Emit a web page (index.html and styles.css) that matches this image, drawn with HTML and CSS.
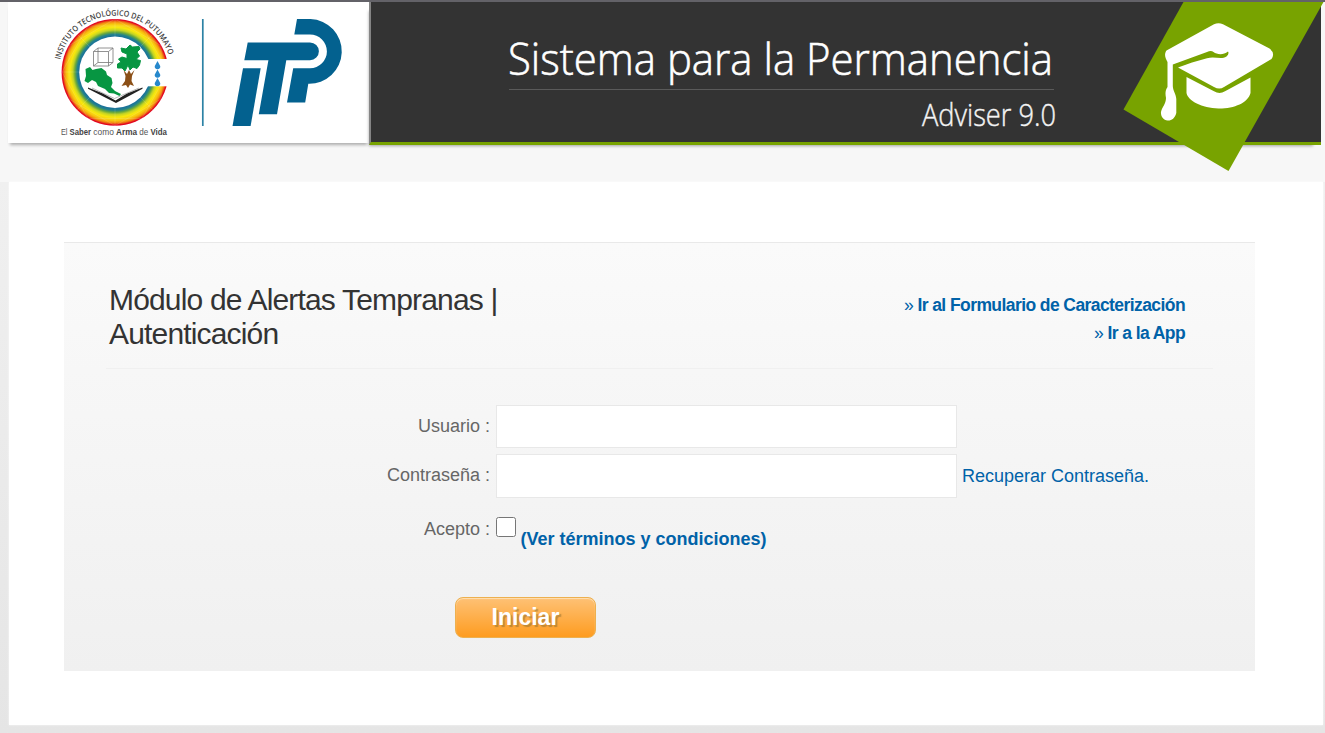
FILE: index.html
```html
<!DOCTYPE html>
<html lang="es">
<head>
<meta charset="utf-8">
<title>Sistema para la Permanencia</title>
<link rel="stylesheet" href="styles.css">
</head>
<body>
<header class="header">
  <div class="brand">
    <svg class="logo" viewBox="8 2 361 141" width="361" height="141">
      <defs>
        <radialGradient id="rainbow" gradientUnits="userSpaceOnUse" cx="115" cy="72.3" r="53.5">
          <stop offset=".67" stop-color="#19709b"/>
          <stop offset=".71" stop-color="#23828b"/>
          <stop offset=".75" stop-color="#69a83c"/>
          <stop offset=".79" stop-color="#c4d324"/>
          <stop offset=".84" stop-color="#f8e80c"/>
          <stop offset=".90" stop-color="#f8c80f"/>
          <stop offset=".94" stop-color="#f39211"/>
          <stop offset=".965" stop-color="#e94a18"/>
          <stop offset=".98" stop-color="#e30d20"/>
          <stop offset="1" stop-color="#e1001e"/>
        </radialGradient>
        <path id="sealArc" d="M60.3 59.8A56 56 0 0 1 169.5 58.5"/>
      </defs>
      <circle cx="115" cy="72.3" r="53.4" fill="url(#rainbow)"/>
      <g fill="none" stroke="#fff" stroke-opacity=".22" stroke-width=".6">
        <path d="M115 19L161 45.600V99L115 125.600L69 99V45.600ZM88 26L142 26L168 72L142 118.500H88L62 72Z"/>
        <path d="M115 19V126M62 72H168M77 34L153 110M153 34L77 110"/>
      </g>
      <circle cx="115" cy="72.3" r="35.800" fill="#fff"/>
      <path d="M147.300 59H174V86.300H147.300Z" fill="#fff"/>
      <g fill="none" stroke="#777" stroke-width=".8">
        <path d="M93.500 51.500H108.500V66H93.500ZM98 48H113V62.500H98ZM93.500 51.500L98 48M108.500 51.500L113 48M108.500 66L113 62.500M93.500 66L98 62.500"/>
      </g>
      <path fill="#079642" d="M84.500 81L86 76L85.500 69L90 67L92.500 70L96 69L101.500 68L106 71.500L107 75L111.500 78L112.500 83L111 87L115 91L121 94L119.500 96L114 93.500L109 93L105 89L98 86L96 82L92 80L88 83Z"/>
      <path fill="#8b4f16" d="M123.500 70L127 74L129 70L131 74L134.500 70L132 76L131.500 81L134 86L130 84.500L128 88L126 85L121.500 86L125 81L125.500 76Z"/>
      <path fill="#079642" stroke="#079642" stroke-width="1" stroke-linejoin="round" d="M121 48L126 49L130 45L132.500 47L139 46.500L140 49L137 52L139.500 56L136 59.500L140.500 60.500L139.500 65L137 68.500L133 67L130 70L128 65L125 71L122 68L117.500 68L117.500 64L121 62L118.500 59L122 57L127 58.500L127 54L122 52Z"/>
      <path d="M88 87.500L103 93.500L115.500 100.500L127 93.500L142.500 87.500V88.800L116 103L88 88.800Z" fill="#222"/>
      <path d="M92 88L114.500 98.500L139 88" fill="none" stroke="#999" stroke-width=".7"/>
      <g fill="#2788cc">
        <path d="M157.500 61L160.200 66A2.800 2.500 0 1 1 154.800 66ZM157.500 69.500L160.200 74.500A2.800 2.500 0 1 1 154.800 74.500ZM157.500 78L160.200 83A2.800 2.500 0 1 1 154.800 83Z"/>
      </g>
      <text class="seal-name"><textPath href="#sealArc" textLength="147" lengthAdjust="spacingAndGlyphs">INSTITUTO TECNOLÓGICO DEL PUTUMAYO</textPath></text>
      <g class="seal-motto">
        <text x="61" y="134.800" textLength="6.500" lengthAdjust="spacingAndGlyphs">El</text>
        <text class="strong" x="69.500" y="134.800" textLength="21.500" lengthAdjust="spacingAndGlyphs">Saber</text>
        <text x="93.300" y="134.800" textLength="20.500" lengthAdjust="spacingAndGlyphs">como</text>
        <text class="strong" x="116" y="134.800" textLength="21" lengthAdjust="spacingAndGlyphs">Arma</text>
        <text x="139.300" y="134.800" textLength="9" lengthAdjust="spacingAndGlyphs">de</text>
        <text class="strong" x="150.500" y="134.800" textLength="16.500" lengthAdjust="spacingAndGlyphs">Vida</text>
      </g>
      <path d="M202.800 19V126" stroke="#2c82a5" stroke-width="1.700"/>
      <g fill="#03618f">
        <path d="M243 68.300H260.700L250.600 126H232.500Z"/>
        <path d="M247.700 42.400H310A8.900 8.900 0 0 1 310 60.200H286.300L277 114.300H258.800L268.400 60.200H244.300Z"/>
        <path d="M297 19H310.500A32.200 32.200 0 0 1 308.300 83.700L305.200 102.500H287L293.200 68.300H310A16.900 16.900 0 0 0 310 34.500H294.300Z"/>
      </g>
    </svg>
  </div>
  <div class="banner">
    <svg class="banner-text" viewBox="371 2 750 140" width="750" height="140">
      <text class="system-name" x="508" y="74.500" textLength="545" lengthAdjust="spacingAndGlyphs">Sistema para la Permanencia</text>
      <path d="M509 89.500H1054" stroke="#5a5a5a"/>
      <text class="system-version" x="922" y="125.500" textLength="134" lengthAdjust="spacingAndGlyphs">Adviser 9.0</text>
    </svg>
    <svg class="badge" viewBox="1120 2 205 170" width="205" height="170">
      <path fill="#78a300" d="M1183.500 2H1323.500L1228.500 171L1123.500 109.500Z"/>
      <g fill="#fff">
        <path d="M1166.500 50.500L1214 24.300Q1218.500 22 1223 24.300L1269.500 48.500Q1275.500 53 1271.500 59L1224 87Q1219.500 90 1214 87L1178 67.500L1192 62.500L1207 58.200C1215 56 1221 60 1226.500 56.500Q1229.500 53.500 1228 51.500C1223 55.500 1217 54.500 1213.500 52Q1211 50 1207 52L1172.800 64.500V86C1173 91 1176 94 1176.300 99V113C1175 118.500 1171 121 1167.500 120.500C1163.500 120 1160.500 116 1161 112C1162 107 1166 104 1166 98C1165 93 1165.500 90 1167.500 87V62C1165 57.500 1164 54 1166.500 50.500Z"/>
        <path d="M1186.500 77L1214 91.300Q1219.500 94.500 1225 91.300L1250.500 77.500V93C1248 103 1234 108.700 1218.500 108.500C1202 108 1188 101 1186.500 93Z"/>
      </g>
    </svg>
  </div>
</header>
<main class="page">
  <section class="card">
    <div class="panel">
      <div class="panel-head">
        <h1 class="title">Módulo de Alertas Tempranas | Autenticación</h1>
        <nav class="links">
          <a class="link" href="#">» <b>Ir al Formulario de Caracterización</b></a>
          <a class="link" href="#">» <b>Ir a la App</b></a>
        </nav>
      </div>
      <form class="form">
        <div class="row">
          <label class="label" for="user">Usuario :</label>
          <input class="field" id="user" type="text">
        </div>
        <div class="row pass-row">
          <label class="label" for="pass">Contraseña :</label>
          <input class="field" id="pass" type="password">
          <a class="recover" href="#">Recuperar Contraseña.</a>
        </div>
        <div class="row terms-row">
          <label class="label" for="accept">Acepto :</label>
          <input class="check" id="accept" type="checkbox">
          <a class="terms" href="#">(Ver términos y condiciones)</a>
        </div>
        <button class="submit" type="button">Iniciar</button>
      </form>
    </div>
  </section>
</main>
</body>
</html>
```
FILE: styles.css
```css
* { box-sizing: border-box; }
body {
  margin: 0;
  height: 733px;
  overflow: hidden;
  background: #f7f7f7;
  font-family: "Liberation Sans", Arial, sans-serif;
  font-size: 18px;
  color: #666;
}
a { color: #0062a8; text-decoration: none; }
svg { display: block; }

.header {
  height: 182px;
  border-top: 2px solid #636268;
  padding: 0 4px 0 8px;
  display: flex;
  align-items: flex-start;
}
.brand {
  width: 361px;
  height: 141px;
  background: #fff;
  box-shadow: 0 4px 3px -2px rgba(0, 0, 0, .3);
}
.banner {
  position: relative;
  flex: 1;
  height: 143px;
  border-left: 2px solid #858585;
  border-bottom: 3px solid #78a300;
  background: #333;
  box-shadow: -4px 5px 3px -4px rgba(0, 0, 0, .35);
}
.badge { position: absolute; left: 749px; top: 0; }
.seal-name { font: 600 8px "Open Sans", sans-serif; fill: #444; }
.seal-motto { font: 9.5px "Liberation Sans", sans-serif; fill: #555; }
.strong { font-weight: 700; fill: #444; }
.system-name {
  font: 300 45px "Open Sans", sans-serif;
  fill: #fff;
  stroke: #fff;
  stroke-width: .6px;
}
.system-version {
  font: 300 31px "Open Sans", sans-serif;
  fill: #f4f4f4;
  stroke: #f4f4f4;
  stroke-width: .4px;
}

.page {
  height: 551px;
  padding: 0 2px 8px 9px;
  background: linear-gradient(#f0f0f0, #e5e5e5);
}
.card {
  height: 543px;
  padding: 60px 68px 54px 55px;
  background: #fff;
  box-shadow: 0 0 2px rgba(255, 255, 255, .8);
}
.panel {
  height: 429px;
  border-top: 1px solid #e9e9e9;
  background: linear-gradient(#fafafa, #f0f0f0);
}
.panel-head {
  height: 126px;
  margin: 0 42px;
  padding: 40px 28px 0 3px;
  border-bottom: 1px solid #f0f0f0;
  display: flex;
  justify-content: space-between;
}
.title {
  margin: 0;
  width: 420px;
  font-size: 30px;
  line-height: 34px;
  font-weight: 400;
  letter-spacing: -.83px;
  color: #333;
}
.links {
  display: flex;
  flex-direction: column;
  align-items: flex-end;
  padding-top: 8px;
}
.link { font-size: 17.5px; line-height: 28px; letter-spacing: -.58px; }
.form { padding-top: 36px; }
.row {
  display: flex;
  align-items: center;
  height: 43px;
  margin-bottom: 6px;
}
.label { width: 426px; margin-right: 6px; text-align: right; }
.field {
  width: 461px;
  height: 43px;
  margin: 0;
  padding: 0 10px;
  border: 1px solid #e8e8e8;
  background: #fff;
  font: inherit;
}
.pass-row { height: 44px; margin-bottom: 10px; }
.pass-row .label { margin-bottom: 1px; }
.pass-row .field { height: 44px; }
.recover { margin: 1px 0 0 5px; }
.check { width: 20px; height: 20px; margin: 0 4.5px 5px 0; }
.terms { font-weight: 700; margin-top: 20px; }
.submit {
  display: block;
  width: 141px;
  height: 41px;
  margin: 46px 0 0 391px;
  padding: 0;
  border: 1px solid #edb04f;
  border-radius: 8px;
  background: linear-gradient(#fec175, #fe9c20);
  box-shadow: inset 0 1px 1px #ffe0b5;
  font: 700 23px "Liberation Sans", Arial, sans-serif;
  color: #fff;
  text-shadow: 2px 2px 1px rgba(140, 110, 50, .55);
}
```
